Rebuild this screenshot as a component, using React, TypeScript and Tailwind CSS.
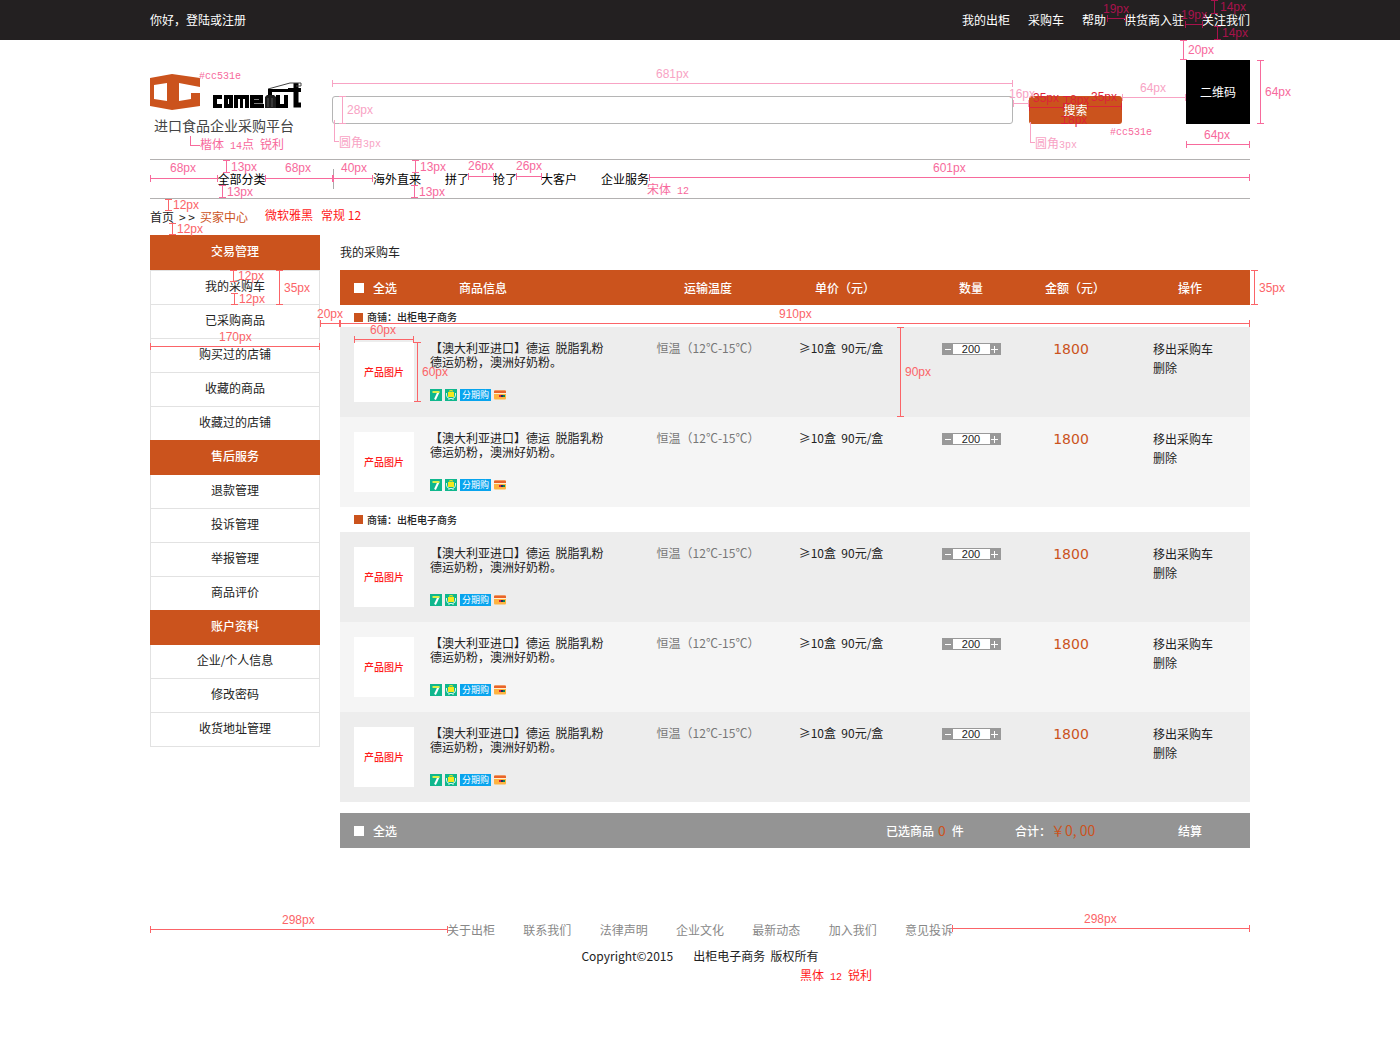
import React from "react";

const hei = "font-['Noto_Sans_CJK_SC',sans-serif]";

type Tone = "dark" | "crimson" | "pale" | "pink" | "red";
const textTone: Record<Tone, string> = {
  dark: "text-[#a8124c]",
  crimson: "text-[#dc2338]",
  pale: "text-[#f8a3c4]",
  pink: "text-[#f76a9c]",
  red: "text-[#fb6468]",
};

/* x, y are offsets from the top-left of the centred column */
type Dim = { x: number; y: number; len: number; v?: boolean; label: string; lx: number; ly: number; tone: Tone };

const dims: Dim[] = [
  { x: 957, y: 18, len: 19, label: "19px", lx: 953, ly: 9, tone: "dark" },
  { x: 1035, y: 24, len: 18, label: "19px", lx: 1031, ly: 15, tone: "dark" },
  { x: 1064, y: 0, len: 14, v: true, label: "14px", lx: 1070, ly: 7, tone: "dark" },
  { x: 1067, y: 26, len: 14, v: true, label: "14px", lx: 1072, ly: 33, tone: "dark" },
  { x: 1033, y: 40, len: 20, v: true, label: "20px", lx: 1038, ly: 50, tone: "pink" },
  { x: 182, y: 83, len: 681, label: "681px", lx: 506, ly: 74, tone: "pale" },
  { x: 192, y: 96, len: 28, v: true, label: "28px", lx: 197, ly: 110, tone: "pale" },
  { x: 863, y: 103, len: 16, label: "16px", lx: 859, ly: 94, tone: "pale" },
  { x: 879, y: 107, len: 35, label: "35px", lx: 883, ly: 98, tone: "crimson" },
  { x: 937, y: 106, len: 35, label: "35px", lx: 941, ly: 97, tone: "crimson" },
  { x: 916, y: 96, len: 8, v: true, label: "8px", lx: 920, ly: 100, tone: "crimson" },
  { x: 914, y: 116, len: 8, v: true, label: "8px", lx: 918, ly: 120, tone: "crimson" },
  { x: 972, y: 97, len: 64, label: "64px", lx: 990, ly: 88, tone: "pale" },
  { x: 1110, y: 60, len: 64, v: true, label: "64px", lx: 1115, ly: 92, tone: "pink" },
  { x: 1036, y: 144, len: 64, label: "64px", lx: 1054, ly: 135, tone: "pink" },
  { x: 0, y: 178, len: 68, label: "68px", lx: 20, ly: 168, tone: "pink" },
  { x: 115, y: 178, len: 68, label: "68px", lx: 135, ly: 168, tone: "pink" },
  { x: 183, y: 178, len: 40, label: "40px", lx: 191, ly: 168, tone: "pink" },
  { x: 76, y: 160, len: 13, v: true, label: "13px", lx: 81, ly: 167, tone: "pink" },
  { x: 72, y: 185, len: 13, v: true, label: "13px", lx: 77, ly: 192, tone: "pink" },
  { x: 265, y: 160, len: 13, v: true, label: "13px", lx: 270, ly: 167, tone: "pink" },
  { x: 264, y: 185, len: 13, v: true, label: "13px", lx: 269, ly: 192, tone: "pink" },
  { x: 318, y: 176, len: 26, label: "26px", lx: 318, ly: 166, tone: "pink" },
  { x: 366, y: 176, len: 26, label: "26px", lx: 366, ly: 166, tone: "pink" },
  { x: 499, y: 177, len: 601, label: "601px", lx: 783, ly: 168, tone: "pink" },
  { x: 18, y: 199, len: 12, v: true, label: "12px", lx: 23, ly: 205, tone: "red" },
  { x: 22, y: 223, len: 12, v: true, label: "12px", lx: 27, ly: 229, tone: "red" },
  { x: 83, y: 270, len: 12, v: true, label: "12px", lx: 88, ly: 276, tone: "red" },
  { x: 84, y: 293, len: 12, v: true, label: "12px", lx: 89, ly: 299, tone: "red" },
  { x: 129, y: 270, len: 35, v: true, label: "35px", lx: 134, ly: 288, tone: "red" },
  { x: 0, y: 346, len: 170, label: "170px", lx: 69, ly: 337, tone: "red" },
  { x: 170, y: 323, len: 20, label: "20px", lx: 167, ly: 314, tone: "red" },
  { x: 190, y: 323, len: 910, label: "910px", lx: 629, ly: 314, tone: "red" },
  { x: 1104, y: 270, len: 35, v: true, label: "35px", lx: 1109, ly: 288, tone: "red" },
  { x: 204, y: 339, len: 60, label: "60px", lx: 220, ly: 330, tone: "red" },
  { x: 267, y: 342, len: 60, v: true, label: "60px", lx: 272, ly: 372, tone: "red" },
  { x: 750, y: 327, len: 90, v: true, label: "90px", lx: 755, ly: 372, tone: "red" },
  { x: 0, y: 929, len: 298, label: "298px", lx: 132, ly: 920, tone: "red" },
  { x: 802, y: 928, len: 298, label: "298px", lx: 934, ly: 919, tone: "red" },
];

function Dimension({ d }: { d: Dim }) {
  const line = d.v
    ? { left: d.x - 3, top: d.y, width: 7, height: d.len }
    : { left: d.x, top: d.y - 3, width: d.len, height: 7 };
  return (
    <div className={textTone[d.tone]}>
      <div
        className={
          d.v
            ? "absolute flex justify-center border-y border-current"
            : "absolute flex flex-col justify-center border-x border-current"
        }
        style={line}
      >
        <div className={d.v ? "w-px bg-current" : "h-px bg-current"} />
      </div>
      <span
        className="absolute font-['Liberation_Sans',sans-serif] text-[12px] leading-[14px] whitespace-nowrap"
        style={{ left: d.lx, top: d.ly - 7 }}
      >
        {d.label}
      </span>
    </div>
  );
}

function Note({ x, y, className, children }: { x: number; y: number; className: string; children: React.ReactNode }) {
  return (
    <span className={`absolute text-[12px] leading-[14px] whitespace-pre ${className}`} style={{ left: x, top: y - 7 }}>
      {children}
    </span>
  );
}

function Mono({ children }: { children: React.ReactNode }) {
  return <span className="font-['Liberation_Mono',monospace] text-[10px]">{children}</span>;
}

function Annotations() {
  return (
    <div className="pointer-events-none absolute inset-0" aria-hidden="true">
      {dims.map((d, i) => (
        <Dimension key={i} d={d} />
      ))}
      <Note x={49} y={74} className="text-[#f76a9c]"><Mono>#cc531e</Mono></Note>
      <Note x={50} y={144} className="text-[#f76a9c]">楷体<Mono> 14</Mono>点<Mono> </Mono>锐利</Note>
      <Note x={189} y={142} className="text-[#f8a3c4]">圆角<Mono>3px</Mono></Note>
      <Note x={885} y={143} className="text-[#f8a3c4]">圆角<Mono>3px</Mono></Note>
      <Note x={960} y={130} className="text-[#f76a9c]"><Mono>#cc531e</Mono></Note>
      <Note x={497} y={189} className="text-[#f76a9c]">宋体<Mono> 12</Mono></Note>
      <Note x={115} y={215} className="text-[#ff1a1a]">微软雅黑{"   "}常规 12</Note>
      <Note x={650} y={975} className="text-[#ff1a1a]">黑体<Mono> 12 </Mono>锐利</Note>
      <div className="absolute top-[136px] left-[40px] h-[10px] w-[10px] border-b border-l border-[#f76a9c]" />
      <div className="absolute top-[120px] left-[184px] h-[22px] w-[5px] border-b border-l border-[#f8a3c4]" />
      <div className="absolute top-[122px] left-[880px] h-[21px] w-[5px] border-b border-l border-[#f8a3c4]" />
    </div>
  );
}

function Logo() {
  return (
    <svg className="block h-[38px] w-[152px]" viewBox="0 0 152 38" role="img" aria-label="comeout">
      <path
        fill="#cb531d"
        fillRule="evenodd"
        d="M0 5 22 1 50 5V14L29 10V28L41 26V20H50V33L22 37 0 33ZM4 12V26L17 28V10Z"
      />
      <g fill="none" stroke="#000" strokeWidth="4">
        <path d="M72 24H65V33H72" />
        <path d="M76 24H81V33H76Z" />
        <path d="M86 35V24H97V35" />
        <path strokeWidth="3" d="M91.500 24V35" />
        <path d="M114 33H102V24H111V28.500H102" />
        <path d="M128 22V33H136V22" />
        <path strokeWidth="5" d="M146 10V32H151" />
        <path d="M138 17H151" />
      </g>
      <path d="M115 24 117 22H124L126 24V35H115Z" fill="#1d1d1d" />
      <path d="M118 25V34M122 25V34" stroke="#555" />
      <path d="M118 16 140 10H151V13H146" fill="none" stroke="#444" />
      <path d="M118 16H140V19H122V22H118Z" />
    </svg>
  );
}

const menu = [
  { title: "交易管理", items: ["我的采购车", "已采购商品", "购买过的店铺", "收藏的商品", "收藏过的店铺"] },
  { title: "售后服务", items: ["退款管理", "投诉管理", "举报管理", "商品评价"] },
  { title: "账户资料", items: ["企业/个人信息", "修改密码", "收货地址管理"] },
];

function Sidebar() {
  return (
    <aside className="w-[170px] shrink-0 text-center">
      {menu.map((g, gi) => (
        <section key={g.title} className={gi ? "relative -mt-px" : ""}>
          <h2 className="h-[35px] bg-[#cb531d] leading-[32px] font-medium text-white">{g.title}</h2>
          <ul className={`border-x border-[#e2e2e2] ${gi ? "" : "border-t"}`}>
            {g.items.map((t) => (
              <li key={t} className="h-[34px] border-b border-[#e2e2e2] leading-[30px]">
                <a href="#">{t}</a>
              </li>
            ))}
          </ul>
        </section>
      ))}
    </aside>
  );
}

function Badges() {
  return (
    <div className="mt-5 flex h-3 items-center gap-[3px]">
      <svg className="size-3" viewBox="0 0 12 12">
        <path fill="#0fb78d" d="M0 0h12v12H0z" />
        <path fill="none" stroke="#fff" strokeWidth="2" d="M8.500 3 5 10.500" />
        <path stroke="#d9f04a" strokeWidth="2" d="M2.500 3h7" />
      </svg>
      <svg className="size-3" viewBox="0 0 12 12">
        <path fill="#0fb78d" d="M0 0h12v12H0z" />
        <path fill="none" stroke="#d8f5ec" d="M1.500 4v2q0 3 3 3.500h3q3-.5 3-3.500V4M4 9.500V11M8 9.500V11" />
        <path fill="#f4e81c" d="M3 3h1.500V1h3v2H9v5H3z" />
        <path fill="#0fb78d" d="M5.300 1.800h1.400V3H5.300z" />
      </svg>
      <span className="h-3 w-[31px] bg-[#08a4ee] text-center text-[9px] leading-3 whitespace-nowrap text-white">分期购</span>
      <svg className="size-3" viewBox="0 0 12 12">
        <rect y="1.500" width="12" height="9" rx="1" fill="#ffb340" />
        <path fill="#e8622c" d="M1 1.500h10q1 0 1 1v1.500H0V2.500q0-1 1-1z" />
        <path fill="#fff0d0" d="M0 4h12v1H0z" />
        <path fill="#d81e3a" d="M5 6h2v2H5z" />
        <path fill="#222a66" d="M7 6h2v2H7z" />
        <path fill="#0c8a4a" d="M9 6h2v2H9z" />
      </svg>
    </div>
  );
}

function ShopRow({ tall }: { tall?: boolean }) {
  return (
    <tr className={tall ? "h-[25px]" : "h-[22px]"}>
      <th
        colSpan={7}
        scope="rowgroup"
        className={`p-0 pl-[14px] text-left text-[10px] leading-[14px] font-medium ${tall ? "" : "pt-[2px]"}`}
      >
        <span className="flex items-center gap-1">
          <span className="size-[9px] bg-[#cb531d]" />
          商铺：出柜电子商务
        </span>
      </th>
    </tr>
  );
}

function ItemRow({ dark }: { dark: boolean }) {
  return (
    <tr className={`h-[90px] align-top ${dark ? "bg-[#ededed]" : "bg-[#f5f5f5]"}`}>
      <td className="p-0 pt-[15px] pl-[14px]">
        <div className="size-[60px] bg-white text-center text-[10px] leading-[60px] font-medium text-[#ff1a1a]">产品图片</div>
      </td>
      <td className="p-0 pt-[14px] leading-[14px] whitespace-nowrap">
        <p>【澳大利亚进口】德运&nbsp; 脱脂乳粉</p>
        <p>德运奶粉，澳洲好奶粉。</p>
        <Badges />
      </td>
      <td className="p-0 pt-[14px] text-center leading-[14px] whitespace-nowrap text-[#777]">恒温（12℃-15℃）</td>
      <td className="p-0 pt-[14px] text-center leading-[14px] whitespace-nowrap">≥10盒&nbsp; 90元/盒</td>
      <td className="p-0 pt-4">
        <div className="mx-auto flex h-3 w-[59px] border border-[#999] bg-[#999] leading-[10px]">
          <button type="button" aria-label="减少" className="flex w-[10px] items-center justify-center">
            <span className="h-px w-[6px] bg-white" />
          </button>
          <input
            aria-label="数量"
            defaultValue="200"
            className="h-[10px] w-[37px] bg-white text-center font-['Liberation_Sans',sans-serif] text-[11px] leading-[10px]"
          />
          <button type="button" aria-label="增加" className="flex w-[10px] items-center justify-center">
            <svg className="size-[7px]" viewBox="0 0 7 7"><path stroke="#fff" d="M0 3.500h7M3.500 0v7" /></svg>
          </button>
        </div>
      </td>
      <td className="p-0 pt-[15px] text-center font-['DejaVu_Sans',sans-serif] text-[14px] leading-[14px] text-[#cb531d]">1800</td>
      <td className="p-0 pt-3 pl-[47px] leading-[19px]">
        <a href="#" className="block">移出采购车</a>
        <a href="#" className="block">删除</a>
      </td>
    </tr>
  );
}

function Check({ id }: { id: string }) {
  return (
    <span className="flex items-center gap-[9px]">
      <input id={id} type="checkbox" className="size-[10px] appearance-none bg-white checked:bg-gray-800" />
      <label htmlFor={id}>全选</label>
    </span>
  );
}

function Cart() {
  return (
    <main className="min-w-0 flex-1">
      <h1 className="h-[35px] leading-[34px]">我的采购车</h1>
      <table className="w-full table-fixed border-collapse">
        <colgroup>
          <col className="w-[90px]" />
          <col className="w-[210px]" />
          <col className="w-[136px]" />
          <col className="w-[130px]" />
          <col className="w-[130px]" />
          <col className="w-[70px]" />
          <col className="w-[144px]" />
        </colgroup>
        <thead>
          <tr className="h-[35px] bg-[#cb531d] whitespace-nowrap text-white">
            <th className="p-0 pl-[14px] font-medium"><Check id="all-top" /></th>
            <th className="p-0 pl-[29px] text-left font-medium">商品信息</th>
            <th className="p-0 font-medium">运输温度</th>
            <th className="p-0 pl-2 font-medium">单价（元）</th>
            <th className="p-0 font-medium">数量</th>
            <th className="p-0 pl-2 font-medium">金额（元）</th>
            <th className="p-0 pl-[72px] text-left font-medium">操作</th>
          </tr>
        </thead>
        <tbody>
          <ShopRow />
          <ItemRow dark />
          <ItemRow dark={false} />
        </tbody>
        <tbody>
          <ShopRow tall />
          <ItemRow dark />
          <ItemRow dark={false} />
          <ItemRow dark />
        </tbody>
      </table>
      <div className="mt-[11px] flex h-[35px] items-center bg-[#949494] pr-12 pl-[14px] font-medium text-white">
        <Check id="all-bottom" />
        <p className="ml-auto flex w-[129px] items-center gap-1">
          已选商品 <span className="text-[14px] font-normal text-[#cb531d]">0</span>
          <span className="ml-[2px]">件</span>
        </p>
        <p className="flex w-[163px] items-center">
          合计：<span className="text-[14px] font-normal text-[#cb531d]">￥0, 00</span>
        </p>
        <button type="button">结算</button>
      </div>
    </main>
  );
}

export default function App() {
  return (
    <div className={`relative min-h-[1053px] bg-white text-[12px] text-[#222] ${hei}`}>
      <div className="absolute inset-x-0 top-0 h-10 bg-[#232021]" />
      <div className="relative mx-auto max-w-[1100px]">
        <div className="flex h-10 items-center justify-between text-white">
          <a href="#">你好，登陆或注册</a>
          <nav className="flex gap-[18px]">
            {["我的出柜", "采购车", "帮助", "供货商入驻", "关注我们"].map((t) => (
              <a key={t} href="#">{t}</a>
            ))}
          </nav>
        </div>

        <header className="flex h-[119px] items-start pt-5">
          <div className="w-[182px] shrink-0 pt-[13px]">
            <Logo />
            <p className="mt-[5px] pl-1 text-[14px] leading-[18px] text-[#444]">进口食品企业采购平台</p>
          </div>
          <form className="flex min-w-0 flex-1 gap-4 pt-9" onSubmit={(e) => e.preventDefault()}>
            <input aria-label="搜索商品" className="h-7 min-w-0 flex-1 rounded-[3px] border border-[#b5b5b5] px-2" />
            <button className="h-7 w-[93px] rounded-[3px] bg-[#cb531d] text-white">搜索</button>
          </form>
          <div className="ml-16 size-16 shrink-0 bg-black text-center leading-[64px] text-white">二维码</div>
        </header>

        <nav className="flex h-10 items-center border-y border-[#b3b1b1] text-black">
          <a href="#" className="w-[184px] border-r border-[#aaa] text-center leading-5">全部分类</a>
          <div className="flex gap-6 pl-[39px]">
            {["海外直来", "拼了", "抢了", "大客户", "企业服务"].map((t) => (
              <a key={t} href="#">{t}</a>
            ))}
          </div>
        </nav>

        <div className="flex h-9 items-center gap-[5px]">
          <a href="#">首页</a>
          <span>&gt; &gt;</span>
          <a href="#" className="text-[#cb531d]">买家中心</a>
        </div>

        <div className="flex gap-5">
          <Sidebar />
          <Cart />
        </div>

        <footer className="pt-[72px] text-center">
          <nav className="mx-auto flex max-w-[506px] justify-between leading-5 text-[#888]">
            {["关于出柜", "联系我们", "法律声明", "企业文化", "最新动态", "加入我们", "意见投诉"].map((t) => (
              <a key={t} href="#">{t}</a>
            ))}
          </nav>
          <p className="mt-[6px] flex justify-center gap-5 leading-5">
            <span>Copyright©2015</span>
            <span>出柜电子商务&nbsp; 版权所有</span>
          </p>
        </footer>
        <Annotations />
      </div>
    </div>
  );
}
